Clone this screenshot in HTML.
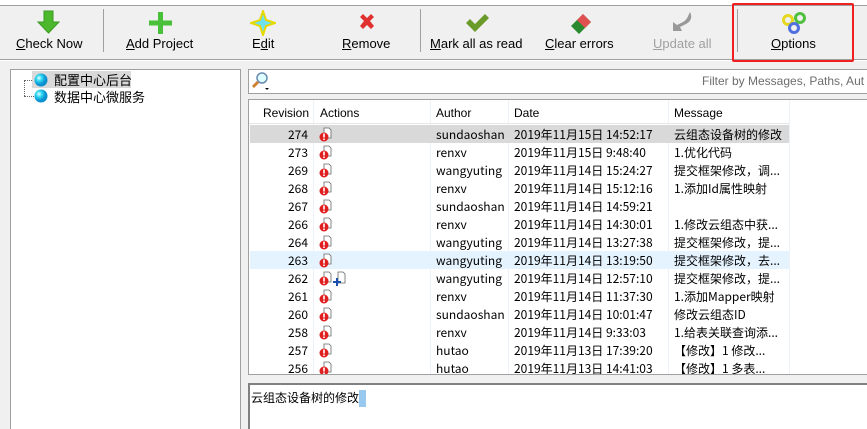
<!DOCTYPE html>
<html><head><meta charset="utf-8"><style>
*{margin:0;padding:0;box-sizing:border-box}
html,body{width:867px;height:429px;overflow:hidden}
body{background:#f0f0f0;font-family:"Liberation Sans","Noto Sans CJK SC",sans-serif;font-size:12px;color:#000;position:relative}
.a{position:absolute}
.tb{left:0;top:0;width:867px;height:6px;background:#fff;border-bottom:1px solid #a0a0a0}
.btn{position:absolute;top:36px;font-size:13px;text-align:center;white-space:nowrap}
.sep{position:absolute;top:9px;width:1px;height:43px;background:#a0a0a0}
.cjk{font-family:"Noto Sans CJK SC","WenQuanYi Zen Hei",sans-serif}
.row{position:absolute;left:250px;width:539px;height:18px;line-height:18px;font-size:12px}
.row span{position:absolute;top:0;white-space:nowrap}
</style></head><body>
<div class="a tb"></div>
<div class="a" style="left:0;top:59px;width:867px;height:1px;background:#a0a0a0"></div>
<div class="a" style="left:0;top:60px;width:867px;height:1px;background:#fff"></div>
<svg class="a" style="left:36px;top:10px" width="26" height="24"><path d="M8 1h9v11h6L12.5 23 2 12h6z" fill="#4cb82c" stroke="#3a9a20"/></svg>
<svg class="a" style="left:148px;top:10px" width="26" height="26"><path d="M10 2h5v8.5h9v5h-9V24h-5v-8.5H1v-5h9z" fill="#48c03a"/></svg>
<svg class="a" style="left:250px;top:10px" width="26" height="26"><path d="M13 1L16 10 25 13 16 16 13 25 10 16 1 13 10 10z" fill="#6fe0f0" stroke="#e8d800" stroke-width="2"/></svg>
<svg class="a" style="left:357px;top:12px" width="20" height="20"><path d="M3 5l3-3 4 4 4-4 3 3-4 4 4 5-3 3-4-4-4 4-3-3 4-5z" fill="#e03030"/></svg>
<svg class="a" style="left:464px;top:12px" width="26" height="22"><path d="M2 11l4-4 5 5L21 2l4 4-14 14z" fill="#6a9a2a"/></svg>
<svg class="a" style="left:567px;top:10px" width="28" height="26"><path d="M4 16L16 4l8 8-12 12z" fill="#2a8a30"/><path d="M10 10L16 4l8 8-6 6z" fill="#e05050"/></svg>
<svg class="a" style="left:670px;top:10px" width="26" height="26"><path d="M20 2c2 4 2 9-4 12l-6 3 2 4H3V12l4 3 6-3c4-2 5-6 7-10z" fill="#999"/></svg>
<svg class="a" style="left:780px;top:10px" width="30" height="26"><circle cx="8" cy="10" r="4.5" fill="none" stroke="#e6d820" stroke-width="3"/><circle cx="20" cy="8" r="4.5" fill="none" stroke="#50c040" stroke-width="3"/><circle cx="14" cy="18" r="4.5" fill="none" stroke="#5070e0" stroke-width="3"/></svg>
<div class="btn" style="left:16px"><u>C</u>heck Now</div>
<div class="sep" style="left:103px"></div>
<div class="btn" style="left:126px"><u>A</u>dd Project</div>
<div class="btn" style="left:252px">E<u>d</u>it</div>
<div class="btn" style="left:342px"><u>R</u>emove</div>
<div class="sep" style="left:420px"></div>
<div class="btn" style="left:430px"><u>M</u>ark all as read</div>
<div class="btn" style="left:545px"><u>C</u>lear errors</div>
<div class="btn" style="left:653px;color:#a0a0a0"><u>U</u>pdate all</div>
<div class="sep" style="left:737px"></div>
<div class="btn" style="left:771px"><u>O</u>ptions</div>
<div class="a" style="left:732px;top:3px;width:122px;height:59px;border:2px solid #f02020;border-radius:2px"></div>
<div class="a" style="left:10px;top:69px;width:231px;height:370px;background:#fff;border:1px solid #a0a0a0"></div>
<div class="a" style="left:24px;top:80px;width:1px;height:16px;border-left:1px dotted #666"></div>
<div class="a" style="left:24px;top:80px;width:10px;border-top:1px dotted #666"></div>
<div class="a" style="left:24px;top:96px;width:10px;border-top:1px dotted #666"></div>
<div class="a" style="left:32px;top:71px;width:99px;height:17px;background:#d9d9d9"></div>
<svg class="a" style="left:34px;top:73px" width="14" height="32"><defs><radialGradient id="g" cx="0.35" cy="0.35"><stop offset="0" stop-color="#e8ffff"/><stop offset="0.45" stop-color="#30d8f0"/><stop offset="1" stop-color="#0a90d0"/></radialGradient></defs><circle cx="7" cy="7" r="6.5" fill="url(#g)"/><circle cx="7" cy="23" r="6.5" fill="url(#g)"/></svg>
<div class="a cjk" style="left:54px;top:71px;font-size:13px;line-height:17px">配置中心后台</div>
<div class="a cjk" style="left:54px;top:88px;font-size:13px;line-height:17px">数据中心微服务</div>
<div class="a" style="left:248px;top:69px;width:630px;height:25px;background:#fff;border:1px solid #a0a0a0"></div>
<svg class="a" style="left:251px;top:71px" width="20" height="20"><circle cx="11" cy="7" r="5" fill="#dff" stroke="#6a8ab0" stroke-width="1.5"/><path d="M7 11l-5 5" stroke="#d08030" stroke-width="3"/><path d="M14 17h4l-2 2z" fill="#000"/></svg>
<div class="a" style="left:702px;top:74px;color:#6d6d6d;font-size:12px;white-space:nowrap">Filter by Messages, Paths, Aut</div>
<div class="a" style="left:248px;top:99px;width:630px;height:276px;background:#fff;border:1px solid #a0a0a0"></div>
<div class="a" style="left:249px;top:100px;width:540px;height:24px;border-bottom:1px solid #e5e5e5"></div>
<div class="a" style="left:313px;top:100px;width:1px;height:274px;background:#ecf2f8"></div>
<div class="a" style="left:430px;top:100px;width:1px;height:274px;background:#ecf2f8"></div>
<div class="a" style="left:508px;top:100px;width:1px;height:274px;background:#ecf2f8"></div>
<div class="a" style="left:668px;top:100px;width:1px;height:274px;background:#ecf2f8"></div>
<div class="a" style="left:789px;top:100px;width:1px;height:274px;background:#ecf2f8"></div>
<div class="a" style="left:263px;top:106px">Revision</div>
<div class="a" style="left:320px;top:106px">Actions</div>
<div class="a" style="left:436px;top:106px">Author</div>
<div class="a" style="left:514px;top:106px">Date</div>
<div class="a" style="left:674px;top:106px">Message</div>
<div class="a" style="left:250px;top:125px;width:539px;height:18px;background:#d9d9d9"></div>
<div class="a" style="left:250px;top:251px;width:539px;height:18px;background:#e5f3ff"></div>
<div id="rows"></div>
<script>
var d=[["274","sundaoshan","2019年11月15日 14:52:17","云组态设备树的修改"],["273","renxv","2019年11月15日 9:48:40","1.优化代码"],["269","wangyuting","2019年11月14日 15:24:27","提交框架修改，调..."],["268","renxv","2019年11月14日 15:12:16","1.添加Id属性映射"],["267","sundaoshan","2019年11月14日 14:59:21",""],["266","renxv","2019年11月14日 14:30:01","1.修改云组态中获..."],["264","wangyuting","2019年11月14日 13:27:38","提交框架修改，提..."],["263","wangyuting","2019年11月14日 13:19:50","提交框架修改，去..."],["262","wangyuting","2019年11月14日 12:57:10","提交框架修改，提..."],["261","renxv","2019年11月14日 11:37:30","1.添加Mapper映射"],["260","sundaoshan","2019年11月14日 10:01:47","修改云组态ID"],["258","renxv","2019年11月14日 9:33:03","1.给表关联查询添..."],["257","hutao","2019年11月13日 17:39:20","【修改】1 修改..."],["256","hutao","2019年11月13日 14:41:03","【修改】1 多表..."]];
var h="";var ic='<svg style="position:absolute;left:69px;top:1px" width="14" height="16"><path d="M5 1h5l2 2v8H5z" fill="#fff" stroke="#666" stroke-width="0.8"/><circle cx="5" cy="10" r="4.5" fill="#e02020"/><rect x="4.2" y="6.5" width="1.6" height="4" fill="#fff"/><rect x="4.2" y="11.5" width="1.6" height="1.5" fill="#fff"/></svg>';
var ic2='<svg style="position:absolute;left:83px;top:1px" width="14" height="16"><path d="M5 1h5l2 2v9H5z" fill="#fff" stroke="#666" stroke-width="0.8"/><path d="M3 7h2v3h3v2H5v3H3v-3H0v-2h3z" fill="#1a4fb0"/></svg>';
d.forEach(function(r,i){var t=126+i*18;h+='<div class="row cjk" style="top:'+t+'px;'+(t+18>374?'height:'+(374-t)+'px;overflow:hidden':'')+'"><span style="right:481px">'+r[0]+'</span>'+ic+(r[0]=="262"?ic2:'')+'<span style="left:186px">'+r[1]+'</span><span style="left:264px">'+r[2]+'</span><span style="left:424px">'+r[3]+'</span></div>'});
document.getElementById("rows").innerHTML=h;
</script>
<div class="a" style="left:248px;top:383px;width:630px;height:50px;background:#fff;border:1px solid #a0a0a0;border-top:2px solid #808080;border-left:2px solid #808080"></div>
<div class="a cjk" style="left:251px;top:390px;font-size:12px;line-height:16px">云组态设备树的修改<span style="background:#99c9ef;display:inline-block;width:7px;height:17px;vertical-align:top"></span></div>
</body></html>
